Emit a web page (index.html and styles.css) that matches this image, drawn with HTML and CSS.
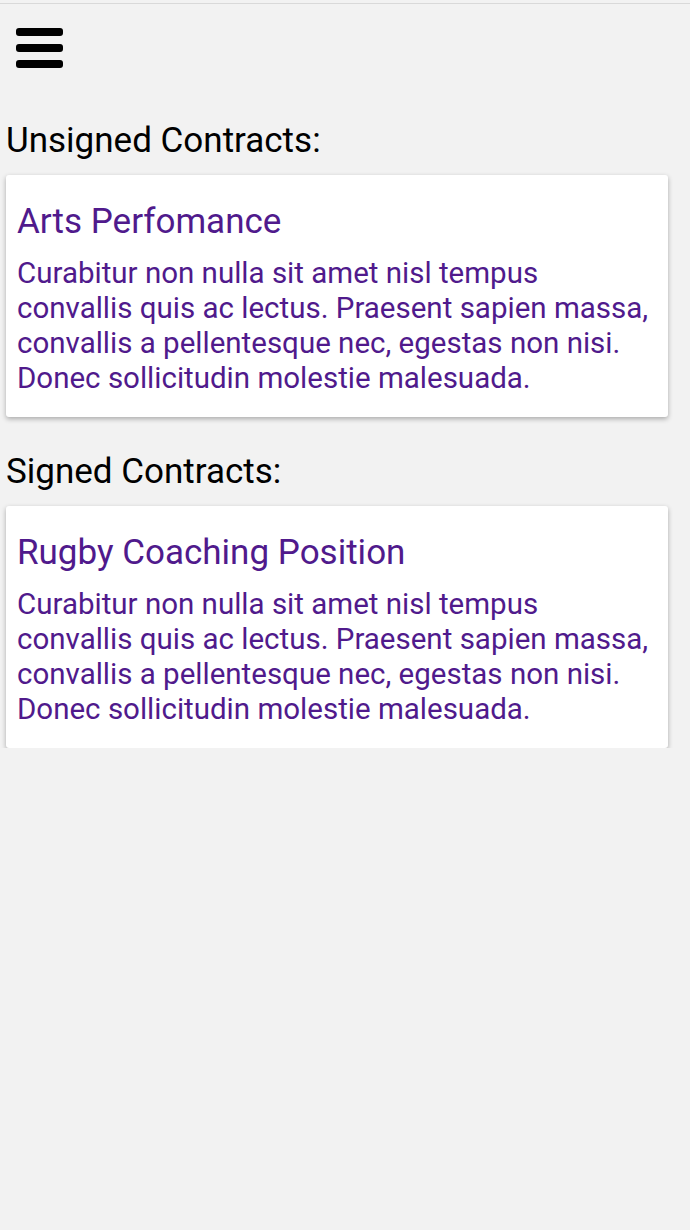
FILE: index.html
```html
<!DOCTYPE html>
<html>
<head>
<meta charset="utf-8">
<link rel="stylesheet" href="styles.css">
</head>
<body>
<div class="topline"></div>
<header class="bar">
  <svg class="menu" width="48" height="40" viewBox="0 0 48 40" aria-hidden="true">
    <rect x="0" y="0" width="47" height="8" rx="3" fill="#000"/>
    <rect x="0" y="16" width="47" height="8" rx="3" fill="#000"/>
    <rect x="0" y="32" width="47" height="8" rx="3" fill="#000"/>
  </svg>
</header>
<main class="content">
  <h2 class="section">Unsigned Contracts:</h2>
  <div class="card">
    <h3 class="card-title">Arts Perfomance</h3>
    <p class="card-text">Curabitur non nulla sit amet nisl tempus convallis quis ac lectus. Praesent sapien massa, convallis a pellentesque nec, egestas non nisi. Donec sollicitudin molestie malesuada.</p>
  </div>
  <h2 class="section">Signed Contracts:</h2>
  <div class="card">
    <h3 class="card-title">Rugby Coaching Position</h3>
    <p class="card-text">Curabitur non nulla sit amet nisl tempus convallis quis ac lectus. Praesent sapien massa, convallis a pellentesque nec, egestas non nisi. Donec sollicitudin molestie malesuada.</p>
  </div>
</main>
</body>
</html>
```
FILE: styles.css
```css
html, body {
  margin: 0;
  padding: 0;
  background: #f2f2f2;
  font-family: Roboto, "Liberation Sans", sans-serif;
  min-height: 100%;
}
.topline {
  height: 3px;
  border-bottom: 1px solid #d9d9d9;
}
.bar {
  box-sizing: border-box;
  height: 117px;
  padding: 24px 0 0 16px;
}
.menu { display: block; }
.content {
  padding: 0 22px 0 6px;
}
.section {
  margin: 0;
  font-weight: 400;
  font-size: 35px;
  line-height: 40px;
  color: #000;
}
.card + .section { margin-top: 35px; }
.card {
  background: #fff;
  border-radius: 3px;
  box-shadow: 0 2px 5px rgba(0,0,0,0.3);
  padding: 26px 16px 21px 11px;
  margin-top: 14px;
}
.card-title {
  margin: 0 0 13px 0;
  font-weight: 400;
  font-size: 35px;
  line-height: 42px;
  color: #501a8c;
}
.card-text {
  margin: 0;
  font-size: 29.5px;
  line-height: 35px;
  color: #501a8c;
}
```
